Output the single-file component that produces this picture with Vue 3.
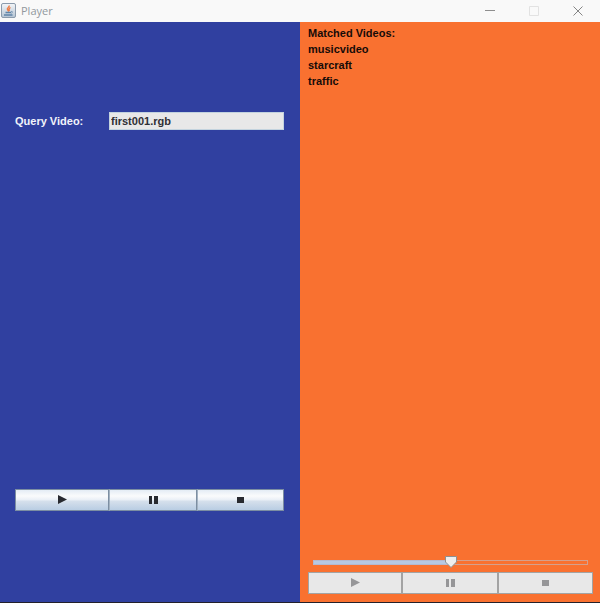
<script setup>
import { ref, computed } from 'vue'

const query = ref('first001.rgb')
const position = ref(50)
const matches = ['musicvideo', 'starcraft', 'traffic']
const actions = [
  { name: 'Play', d: 'M0 0L9 4.5L0 9Z' },
  { name: 'Pause', d: 'M0 1H3V9H0ZM5 1H9V9H5Z' },
  { name: 'Stop', d: 'M1 2H8V8H1Z' },
]
const percent = computed(() => position.value + '%')
</script>

<template>
  <div class="window">
    <header class="titlebar">
      <svg class="logo" width="17" height="17" viewBox="0 0 17 17" aria-hidden="true">
        <defs>
          <linearGradient id="tile" x1="0" y1="0" x2="0" y2="1">
            <stop offset="0" stop-color="#f4f6f8" />
            <stop offset="1" stop-color="#b4c4d4" />
          </linearGradient>
        </defs>
        <rect x="1.500" y="1.500" width="14" height="14" rx="1.500" fill="url(#tile)" stroke="#8b9bac" />
        <path d="M9 3.500C10 5.500 6.500 5.500 7.500 7.500L9 9.500M10.500 5.500C9 6.500 8.500 7.500 9.500 9" fill="none" stroke="#ee7f48" stroke-width="1.500" />
        <path d="M5.500 10.500H11M4 13H12.500" fill="none" stroke="#5f84a8" stroke-width="1.500" />
        <path d="M11 9.500C13 9 13 10.500 11 11.500" fill="none" stroke="#7f9cb8" />
      </svg>
      <h1 class="title">Player</h1>
      <div class="window-buttons">
        <button type="button" aria-label="Minimize">
          <svg width="10" height="10" viewBox="0 0 10 10"><path d="M0 4.500H10" stroke="#8e8e8e" /></svg>
        </button>
        <button type="button" aria-label="Maximize" disabled>
          <svg width="10" height="10" viewBox="0 0 10 10"><path d="M.5.5H9.500V9.500H.5Z" fill="none" stroke="#e2e2e2" /></svg>
        </button>
        <button type="button" aria-label="Close">
          <svg width="10" height="10" viewBox="0 0 10 10"><path d="M.5.5L9.500 9.500M9.500.5L.5 9.500" stroke="#858585" /></svg>
        </button>
      </div>
    </header>

    <main class="panes">
      <section class="pane query-pane">
        <div class="query-row">
          <label for="query">Query Video:</label>
          <input id="query" v-model="query" type="text" />
        </div>
        <div class="controls query-controls">
          <button v-for="a in actions" :key="a.name" type="button" :aria-label="a.name">
            <svg width="9" height="9" viewBox="0 0 9 9"><path :d="a.d" fill="currentColor" /></svg>
          </button>
        </div>
      </section>

      <section class="pane match-pane">
        <div class="matches">
          <h2>Matched Videos:</h2>
          <ul>
            <li v-for="m in matches" :key="m">{{ m }}</li>
          </ul>
        </div>
        <div class="playback">
          <div class="slider">
            <div class="track"><div class="fill" :style="{ width: percent }"></div></div>
            <svg class="thumb" :style="{ left: percent }" width="12" height="12" viewBox="0 0 12 12" aria-hidden="true">
              <path d="M.5.5H11.500V6L6 11.500L.5 6Z" fill="#eeeeee" stroke="#8d9092" />
            </svg>
            <input v-model.number="position" type="range" min="0" max="100" aria-label="Position" />
          </div>
          <div class="controls match-controls">
            <button v-for="a in actions" :key="a.name" type="button" :aria-label="a.name" disabled>
              <svg width="9" height="9" viewBox="0 0 9 9"><path :d="a.d" fill="currentColor" /></svg>
            </button>
          </div>
        </div>
      </section>
    </main>
  </div>
</template>

<style>
body {
  margin: 0;
}
</style>

<style scoped>
.window {
  box-sizing: border-box;
  min-height: 100vh;
  display: flex;
  flex-direction: column;
  border-bottom: 1px solid #23202a;
  font: bold 11px/16px "Liberation Sans", Arial, sans-serif;
}
.titlebar {
  height: 22px;
  display: flex;
  align-items: center;
  background: #f9f9f9;
}
.logo {
  margin: 0 4px 2px 0;
}
.title {
  margin: 0 auto 0 0;
  padding-bottom: 1px;
  color: #92989e;
  font: 11px/20px "Open Sans", "Noto Sans", sans-serif;
}
.window-buttons {
  display: flex;
  height: 20px;
}
.window-buttons button {
  width: 44px;
  padding: 0;
  border: 0;
  background: none;
  display: grid;
  place-items: center;
}
.panes {
  flex: 1;
  display: grid;
  grid-template-columns: 1fr 1fr;
}
.pane {
  display: flex;
  flex-direction: column;
  justify-content: space-between;
}
.query-pane {
  padding: 90px 16px 91px 15px;
  background: #3040a0;
}
.match-pane {
  padding: 3px 7px 8px 8px;
  background: #f97130;
}
.query-row {
  display: grid;
  grid-template-columns: 94fr 175fr;
  align-items: center;
  color: #f2f4fb;
}
.query-row input {
  box-sizing: border-box;
  min-width: 0;
  width: 100%;
  height: 18px;
  padding: 0 1px;
  border: 1px solid #c3d3de;
  border-radius: 0;
  background: #e8e8e8;
  color: #303035;
  font: inherit;
}
.controls {
  display: grid;
  height: 22px;
}
.query-controls {
  grid-template-columns: 94fr 88fr 87fr;
}
.match-controls {
  grid-template-columns: 94fr 96fr 95fr;
}
.controls button {
  display: grid;
  place-items: center;
  padding: 0 0 2px;
  border: 1px solid #7c8ea2;
  border-radius: 0;
  background: linear-gradient(#e4ecf5, #fafbfc 30%, #e9eff6 50%, #d6e0ec 55%, #b9cde3);
  color: #282a30;
}
.controls button + button {
  border-left-color: #a4b3c2;
}
.controls button:disabled {
  border-color: #a3a3a3;
  background: #e8e8e8;
  color: #969698;
}
h2,
ul {
  margin: 0;
  padding: 0;
  font: inherit;
  list-style: none;
}
.matches {
  color: #160b08;
}
.slider {
  position: relative;
  height: 12px;
  margin: 0 5px 4px 5px;
  padding-top: 4px;
  box-sizing: border-box;
}
.track {
  box-sizing: border-box;
  height: 5px;
  border: 1px solid #d5a08c;
}
.fill {
  height: 3px;
  background: #b7c8e2;
  box-shadow: 0 0 0 1px #b4b9d0;
}
.thumb {
  position: absolute;
  top: 0;
  transform: translateX(-50%);
}
.slider input {
  position: absolute;
  inset: 0;
  width: 100%;
  height: 100%;
  margin: 0;
  opacity: 0;
}
</style>
